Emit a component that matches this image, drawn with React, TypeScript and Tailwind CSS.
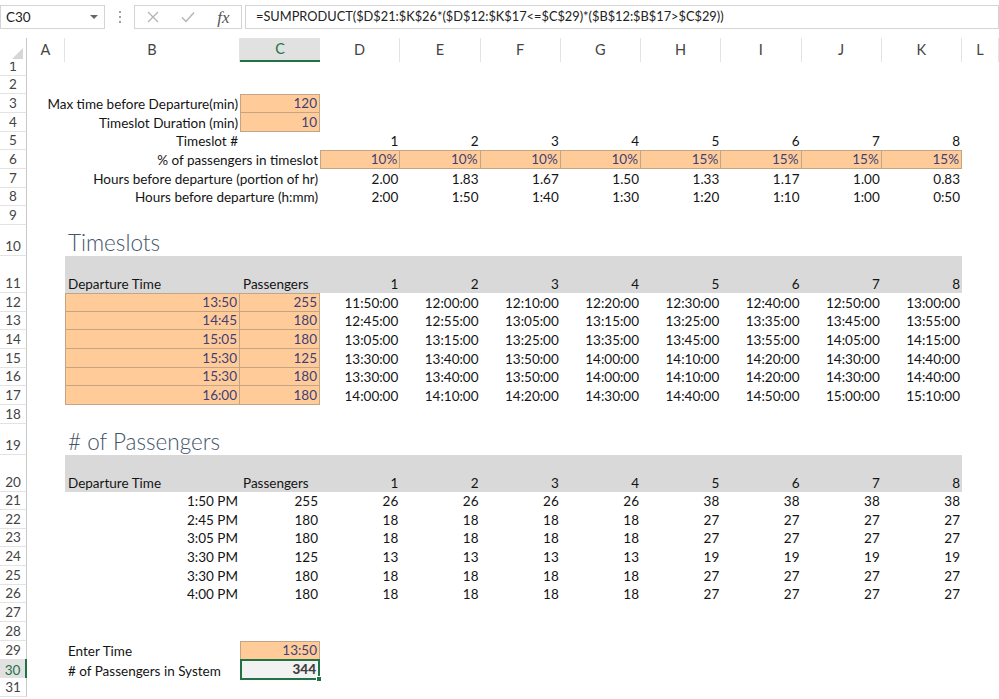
import React from 'react'

// ── Cell model ─────────────────────────────────────────
type Cell = {
  t?: string
  a?: 'l' | 'r'
  k?: 'in' | 'hd' | 'out'
  span?: number
  bt?: boolean
  bl?: boolean
  title?: boolean
}

const E: Cell = {}
const COLS = 'grid grid-cols-[27px_38px_175px_80px_repeat(8,80.25px)_1fr]'
const FONT = { fontFamily: 'Lato, "Liberation Sans", sans-serif' }

const nums = (v: string[], extra: Partial<Cell> = {}): Cell[] => v.map((t) => ({ t, a: 'r', ...extra }))

const SLOTS = ['1', '2', '3', '4', '5', '6', '7', '8']
const PCT = ['10%', '10%', '10%', '10%', '15%', '15%', '15%', '15%']

const DEPART = [
  { d: '13:50', p: '255', pm: '1:50 PM', times: ['11:50:00', '12:00:00', '12:10:00', '12:20:00', '12:30:00', '12:40:00', '12:50:00', '13:00:00'], pax: ['26', '26', '26', '26', '38', '38', '38', '38'] },
  { d: '14:45', p: '180', pm: '2:45 PM', times: ['12:45:00', '12:55:00', '13:05:00', '13:15:00', '13:25:00', '13:35:00', '13:45:00', '13:55:00'], pax: ['18', '18', '18', '18', '27', '27', '27', '27'] },
  { d: '15:05', p: '180', pm: '3:05 PM', times: ['13:05:00', '13:15:00', '13:25:00', '13:35:00', '13:45:00', '13:55:00', '14:05:00', '14:15:00'], pax: ['18', '18', '18', '18', '27', '27', '27', '27'] },
  { d: '15:30', p: '125', pm: '3:30 PM', times: ['13:30:00', '13:40:00', '13:50:00', '14:00:00', '14:10:00', '14:20:00', '14:30:00', '14:40:00'], pax: ['13', '13', '13', '13', '19', '19', '19', '19'] },
  { d: '15:30', p: '180', pm: '3:30 PM', times: ['13:30:00', '13:40:00', '13:50:00', '14:00:00', '14:10:00', '14:20:00', '14:30:00', '14:40:00'], pax: ['18', '18', '18', '18', '27', '27', '27', '27'] },
  { d: '16:00', p: '180', pm: '4:00 PM', times: ['14:00:00', '14:10:00', '14:20:00', '14:30:00', '14:40:00', '14:50:00', '15:00:00', '15:10:00'], pax: ['18', '18', '18', '18', '27', '27', '27', '27'] },
]

type RowDef = { n: number; h: string; cells?: Cell[] }

const R = 'h-[18.67px]'

const ROWS: RowDef[] = [
  { n: 1, h: R },
  { n: 2, h: R },
  { n: 3, h: R, cells: [E, { t: 'Max time before Departure(min)', a: 'r' }, { t: '120', a: 'r', k: 'in', bt: true, bl: true }] },
  { n: 4, h: R, cells: [E, { t: 'Timeslot Duration (min)', a: 'r' }, { t: '10', a: 'r', k: 'in', bl: true }] },
  { n: 5, h: R, cells: [E, { t: 'Timeslot #', a: 'r' }, E, ...nums(SLOTS)] },
  { n: 6, h: R, cells: [E, { t: '% of passengers in timeslot', a: 'r', span: 2 }, ...PCT.map((t, i): Cell => ({ t, a: 'r', k: 'in', bt: true, bl: i === 0 }))] },
  { n: 7, h: R, cells: [E, { t: 'Hours before departure (portion of hr)', a: 'r', span: 2 }, ...nums(['2.00', '1.83', '1.67', '1.50', '1.33', '1.17', '1.00', '0.83'])] },
  { n: 8, h: R, cells: [E, { t: 'Hours before departure (h:mm)', a: 'r', span: 2 }, ...nums(['2:00', '1:50', '1:40', '1:30', '1:20', '1:10', '1:00', '0:50'])] },
  { n: 9, h: R },
  { n: 10, h: 'h-[31px]', cells: [E, { t: 'Timeslots', title: true }] },
  { n: 11, h: 'h-[37px]', cells: [E, { t: 'Departure Time', k: 'hd' }, { t: 'Passengers', k: 'hd' }, ...nums(SLOTS, { k: 'hd' })] },
  ...DEPART.map((r, i): RowDef => ({
    n: 12 + i,
    h: R,
    cells: [E, { t: r.d, a: 'r', k: 'in', bl: true, bt: i === 0 }, { t: r.p, a: 'r', k: 'in', bt: i === 0 }, ...nums(r.times)],
  })),
  { n: 18, h: R },
  { n: 19, h: 'h-[31px]', cells: [E, { t: '# of Passengers', title: true }] },
  { n: 20, h: 'h-[37px]', cells: [E, { t: 'Departure Time', k: 'hd' }, { t: 'Passengers', k: 'hd' }, ...nums(SLOTS, { k: 'hd' })] },
  ...DEPART.map((r, i): RowDef => ({
    n: 21 + i,
    h: R,
    cells: [E, { t: r.pm, a: 'r' }, { t: r.p, a: 'r' }, ...nums(r.pax)],
  })),
  { n: 27, h: R },
  { n: 28, h: R },
  { n: 29, h: R, cells: [E, { t: 'Enter Time' }, { t: '13:50', a: 'r', k: 'in', bt: true, bl: true }] },
  { n: 30, h: R, cells: [E, { t: '# of Passengers in System' }, { t: '344', a: 'r', k: 'out' }] },
  { n: 31, h: R },
]

// ── Grid cell ──────────────────────────────────────────
function GridCell({ c }: { c: Cell }) {
  const span = c.span === 2 ? 'col-span-2' : ''
  const align = c.a === 'r' ? 'justify-end pr-[2px]' : 'justify-start pl-[3px]'
  let look = 'text-[#141414]'
  if (c.k === 'in') {
    look = `bg-[#ffcc99] text-[#3f3f76] border-r border-b border-[#c3a585] ${c.bt ? 'border-t' : ''} ${c.bl ? 'border-l' : ''}`
  } else if (c.k === 'hd') {
    look = 'bg-[#d9d9d9] text-[#141414]'
  } else if (c.k === 'out') {
    look = 'relative bg-[#f2f2f2] text-[#3f3f3f] font-black border-2 border-[#217346]'
  }
  if (c.title) {
    return (
      <div className={`flex items-end pl-[3px] whitespace-nowrap ${span}`}>
        <span className="text-[22.5px] leading-[27px] text-[#44546a] font-light">{c.t}</span>
      </div>
    )
  }
  return (
    <div className={`flex items-end whitespace-nowrap text-[13.5px] leading-[16px] pb-px ${align} ${look} ${span}`}>
      {c.t}
      {c.k === 'out' && (
        <span className="absolute -right-[4px] -bottom-[4px] w-[6px] h-[6px] bg-[#217346] border border-white" />
      )}
    </div>
  )
}

function SheetRow({ row }: { row: RowDef }) {
  const cells = row.cells ?? []
  let used = cells.reduce((s, c) => s + (c.span ?? 1), 0)
  const padded = [...cells]
  while (used < 12) {
    padded.push(E)
    used++
  }
  const sel = row.n === 30
  return (
    <div className={`${COLS} ${row.h}`}>
      <div
        className={`flex items-end justify-center pb-px text-[13.5px] leading-[16px] border-b border-[#e3e3e3] ${
          sel ? 'bg-[#e1e1e1] text-[#217346] border-r-2 border-r-[#217346]' : 'bg-white text-[#444] border-r border-r-[#c8c8c8]'
        }`}
      >
        {row.n}
      </div>
      {padded.map((c, i) => (
        <GridCell key={i} c={c} />
      ))}
    </div>
  )
}

// ── Formula bar ────────────────────────────────────────
function FormulaBar() {
  return (
    <div className="flex items-start h-[38px] pt-[5px] bg-white">
      <div className="flex items-center justify-between w-[105px] h-[24px] border border-[#d4d4d4] pl-[5px] pr-[6px] text-[13.5px] text-[#222]">
        <span>C30</span>
        <svg width="8" height="5" viewBox="0 0 8 5">
          <path d="M0 0 L8 0 L4 4 Z" fill="#666" />
        </svg>
      </div>
      <div className="flex flex-col items-center justify-center gap-[3px] w-[29px] h-[24px]">
        <span className="w-[2px] h-[2px] bg-[#a0a0a0]" />
        <span className="w-[2px] h-[2px] bg-[#a0a0a0]" />
        <span className="w-[2px] h-[2px] bg-[#a0a0a0]" />
      </div>
      <div className="flex items-center w-[108px] h-[24px] border border-[#d4d4d4]">
        <div className="w-[36px] flex justify-center">
          <svg width="12" height="12" viewBox="0 0 12 12">
            <path d="M1 1 L11 11 M11 1 L1 11" stroke="#b4b4b4" strokeWidth="1.3" fill="none" />
          </svg>
        </div>
        <div className="w-[36px] flex justify-center">
          <svg width="14" height="12" viewBox="0 0 14 12">
            <path d="M1 6.5 L5 10.5 L13 1.5" stroke="#b4b4b4" strokeWidth="1.4" fill="none" />
          </svg>
        </div>
        <div className="w-[36px] flex justify-center">
          <span className="italic text-[17px] leading-none text-[#555]" style={{ fontFamily: '"Liberation Serif", serif' }}>
            fx
          </span>
        </div>
      </div>
      <div className="flex items-center flex-1 h-[24px] ml-[3px] border border-[#d4d4d4] pl-[10px] text-[12.8px] text-[#222] whitespace-nowrap">
        =SUMPRODUCT($D$21:$K$26*($D$12:$K$17&lt;=$C$29)*($B$12:$B$17&gt;$C$29))
      </div>
    </div>
  )
}

// ── Column headers ─────────────────────────────────────
const LETTERS = ['A', 'B', 'C', 'D', 'E', 'F', 'G', 'H', 'I', 'J', 'K', 'L']

function ColumnHeader() {
  return (
    <div className={`${COLS} h-[19px] border-b border-[#c8c8c8]`}>
      <div className="relative bg-white border-r border-[#c8c8c8]">
        <svg className="absolute right-[3px] bottom-[3px]" width="11" height="11" viewBox="0 0 11 11">
          <path d="M11 0 L11 11 L0 11 Z" fill="#d6d6d6" />
        </svg>
      </div>
      {LETTERS.map((l) => (
        <div
          key={l}
          className={`flex items-center justify-center text-[14.5px] ${
            l === 'C'
              ? 'bg-[#e1e1e1] text-[#217346] border-b-2 border-[#217346]'
              : 'bg-white text-[#444] border-r border-[#e3e3e3]'
          }`}
        >
          {l}
        </div>
      ))}
    </div>
  )
}

export default function App() {
  return (
    <div className="w-[999px] h-[699px] overflow-hidden bg-white" style={FONT}>
      <FormulaBar />
      <ColumnHeader />
      {ROWS.map((r) => (
        <SheetRow key={r.n} row={r} />
      ))}
    </div>
  )
}
